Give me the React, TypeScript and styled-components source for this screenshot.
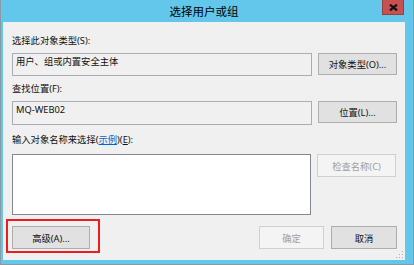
import React from "react";
import styled, { createGlobalStyle } from "styled-components";

const GlobalStyle = createGlobalStyle`
  html, body { margin: 0; padding: 0; background: #ffffff; }
  * { box-sizing: border-box; }
`;

const FONT = `"Noto Sans", "Noto Sans CJK SC", sans-serif`;

const Window = styled.div`
  width: 414px;
  height: 265px;
  background: #62c7ea;
  border-left: 1px solid #8a9aa4;
  border-right: 1px solid #8a9aa4;
  border-bottom: 1px solid #8a9aa4;
  padding: 0 8px 4px 2px;
  display: flex;
  flex-direction: column;
  font-family: ${FONT};
  color: #111111;
`;

const TitleBar = styled.div`
  position: relative;
  height: 22px;
  display: flex;
  align-items: center;
  justify-content: center;
`;

const Title = styled.div`
  font-size: 11.5px;
  line-height: 22px;
  color: #000;
  padding-top: 1px;
`;

const CloseButton = styled.div`
  position: absolute;
  top: 0;
  right: 1px;
  width: 22px;
  height: 15px;
  background: #c75050;
  border: 1px solid #9c3f3f;
  border-top: none;
  display: flex;
  align-items: center;
  justify-content: center;
`;

const Content = styled.div`
  position: relative;
  flex: 1;
  background: #f0f0f0;
  padding: 13px 8px 0 9px;
  display: flex;
  flex-direction: column;
`;

const Label = styled.div<{ $mt?: number; $mb?: number }>`
  font-size: 9.3px;
  line-height: 12px;
  height: 12px;
  white-space: nowrap;
  margin-top: ${(p) => p.$mt ?? 0}px;
  margin-bottom: ${(p) => p.$mb ?? 0}px;
`;

const Link = styled.span`
  color: #0066cc;
  text-decoration: underline;
`;

const Mnemonic = styled.span`
  text-decoration: underline;
`;

const Row = styled.div`
  display: flex;
  gap: 6px;
  align-items: flex-start;
`;

const Field = styled.div<{ $h: number }>`
  width: 300px;
  height: ${(p) => p.$h}px;
  border: 1px solid #abadb3;
  background: #f0f0f0;
  padding: 2px 3px 0;
  font-size: 9.3px;
  line-height: 12px;
  white-space: nowrap;
`;

const TextArea = styled.div`
  width: 299px;
  height: 61px;
  border: 1px solid #828790;
  background: #ffffff;
`;

const Button = styled.div<{ $w: number; $h?: number; $disabled?: boolean }>`
  width: ${(p) => p.$w}px;
  height: ${(p) => p.$h ?? 23}px;
  flex: none;
  display: flex;
  align-items: center;
  justify-content: center;
  font-size: 9.3px;
  white-space: nowrap;
  background: ${(p) => (p.$disabled ? "#f4f4f4" : "#e1e1e1")};
  border: 1px solid ${(p) => (p.$disabled ? "#d0d0d0" : "#adadad")};
  color: ${(p) => (p.$disabled ? "#a0a0a0" : "#111111")};
`;

const BottomRow = styled.div`
  margin-top: 11px;
  display: flex;
  align-items: flex-start;
`;

const Highlight = styled.div`
  position: relative;
  &::after {
    content: "";
    position: absolute;
    top: -7px;
    left: -6px;
    right: -10px;
    bottom: -4px;
    border: 2px solid #ee1c1c;
    pointer-events: none;
  }
`;

const Spacer = styled.div`
  flex: 1;
`;

const ButtonGroup = styled.div`
  display: flex;
  gap: 7px;
`;

const Grip = styled.div`
  position: absolute;
  right: 1px;
  bottom: 1px;
  width: 8px;
  height: 8px;
  display: flex;
`;

export default function App() {
  return (
    <>
      <GlobalStyle />
      <Window>
        <TitleBar>
          <Title>选择用户或组</Title>
          <CloseButton>
            <svg width="9" height="7" viewBox="0 0 9 7">
              <path d="M1 0.6 L8 6.4 M8 0.6 L1 6.4" stroke="#111" strokeWidth="2.2" />
            </svg>
          </CloseButton>
        </TitleBar>
        <Content>
          <Label $mb={6}>选择此对象类型(S):</Label>
          <Row>
            <Field $h={23}>用户、组或内置安全主体</Field>
            <Button $w={79} $h={22}>对象类型(O)...</Button>
          </Row>
          <Label $mt={7} $mb={6}>查找位置(F):</Label>
          <Row>
            <Field $h={24}>MQ-WEB02</Field>
            <Button $w={79} $h={22}>位置(L)...</Button>
          </Row>
          <Label $mt={9} $mb={8}>
            输入对象名称来选择(<Link>示例</Link>)(<Mnemonic>E</Mnemonic>):
          </Label>
          <Row>
            <TextArea />
            <Button $w={79} $disabled>检查名称(C)</Button>
          </Row>
          <BottomRow>
            <Highlight>
              <Button $w={78}>高级(A)...</Button>
            </Highlight>
            <Spacer />
            <ButtonGroup>
              <Button $w={65} $disabled>确定</Button>
              <Button $w={66}>取消</Button>
            </ButtonGroup>
          </BottomRow>
          <Grip>
            <svg width="8" height="8" viewBox="0 0 8 8">
              <rect x="6" y="0" width="1" height="1" fill="#b0b0b0" />
              <rect x="3" y="3" width="1" height="1" fill="#b0b0b0" />
              <rect x="6" y="3" width="1" height="1" fill="#b0b0b0" />
              <rect x="0" y="6" width="1" height="1" fill="#b0b0b0" />
              <rect x="3" y="6" width="1" height="1" fill="#b0b0b0" />
              <rect x="6" y="6" width="1" height="1" fill="#b0b0b0" />
            </svg>
          </Grip>
        </Content>
      </Window>
    </>
  );
}
